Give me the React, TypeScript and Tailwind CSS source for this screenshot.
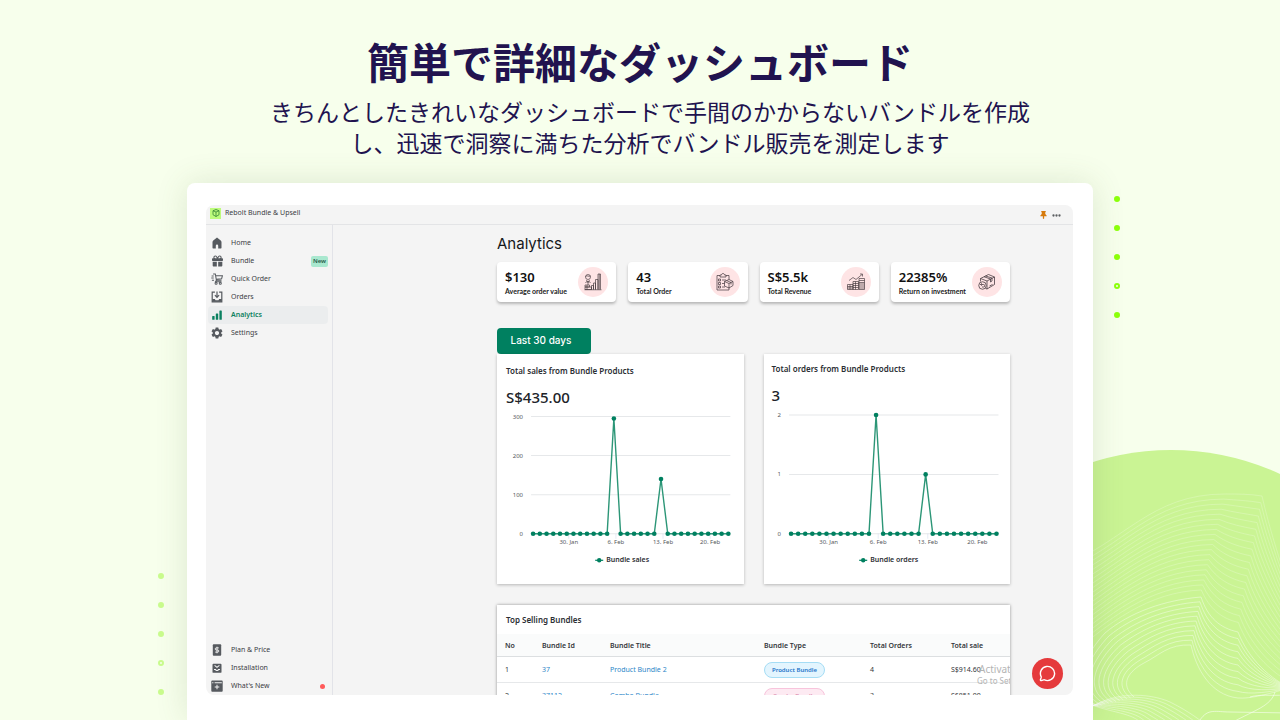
import type { ReactNode } from "react";
import clsx from "clsx";
import { MessageCircle } from "lucide-react";
import { FaGift } from "react-icons/fa6";
import { MdSettings } from "react-icons/md";

type NavItem = {
  label: string;
  icon: ReactNode;
  active?: boolean;
  badge?: string;
  dot?: boolean;
};

function HomeIcon() {
  return (
    <svg viewBox="0 0 20 20" className="h-3 w-3" fill="currentColor">
      <path d="M10 .8 3.800 5.900A3.400 3.400 0 0 0 2.500 8.600V18a1 1 0 0 0 1 1H8v-4.500a2 2 0 0 1 4 0V19h4.500a1 1 0 0 0 1-1V8.600a3.400 3.400 0 0 0-1.300-2.700z" />
    </svg>
  );
}

function CartIcon() {
  return (
    <svg viewBox="0 0 20 20" className="h-3 w-3" fill="none" stroke="currentColor" strokeWidth="1.700">
      <path d="M3.500 1.500h3.700l1.800 10.500h8.500M7.600 4.500h11.400l-1.300 5.200-9 .8M9 12l-1.500 2.500h10" />
      <path d="M1 5h3.500M.5 8.500h4M1.500 12h3.500" />
      <circle cx="8.500" cy="17" r="1.700" />
      <circle cx="15.500" cy="17" r="1.700" />
    </svg>
  );
}

function OrdersIcon() {
  return (
    <svg viewBox="0 0 20 20" className="h-3 w-3" fill="none" stroke="currentColor" strokeWidth="2">
      <path d="M6.500 2H2v16h16V2h-4.500" />
      <path d="M2 13.500h4.500l1 2h5l1-2H18V18H2z" fill="currentColor" stroke="none" />
      <path d="M10 1v9M6.500 7 10 10.500 13.500 7" />
    </svg>
  );
}

function BarsIcon() {
  return (
    <svg viewBox="0 0 20 20" className="h-3 w-3" fill="currentColor">
      <rect x="2" y="11.500" width="4" height="6.500" rx="1" />
      <rect x="8" y="7.500" width="4" height="10.500" rx="1" />
      <rect x="14" y="2.500" width="4" height="15.500" rx="1" />
    </svg>
  );
}

function PriceIcon() {
  return (
    <svg viewBox="0 0 20 20" className="h-3 w-3" fill="none">
      <rect x="3" y="0.500" width="14" height="19" rx="1.500" fill="currentColor" />
      <path d="M13 6.500H8.800a1.700 1.700 0 0 0 0 3.500h2.400a1.700 1.700 0 0 1 0 3.500H7M10 4.500v11" stroke="#f4f4f4" strokeWidth="1.600" />
    </svg>
  );
}

function InstallIcon() {
  return (
    <svg viewBox="0 0 20 20" className="h-3 w-3" fill="none">
      <rect x="2.500" y="3" width="15" height="15" rx="1.500" fill="currentColor" />
      <path d="M6 5.500 10 9l4-3.500M5 12.500h2.500l1 1.500h3l1-1.500H15" stroke="#f4f4f4" strokeWidth="1.700" />
    </svg>
  );
}

function NewsIcon() {
  return (
    <svg viewBox="0 0 20 20" className="h-3 w-3" fill="none">
      <rect x="0.500" y="1" width="19" height="18.500" rx="1.500" fill="currentColor" />
      <path d="M2 4.500h2M6 4.500h12M10 8v7.500M6.200 11.800h7.600" stroke="#f4f4f4" strokeWidth="1.700" />
    </svg>
  );
}

const mainNav: NavItem[] = [
  { label: "Home", icon: <HomeIcon /> },
  { label: "Bundle", icon: <FaGift className="h-3 w-[11px]" />, badge: "New" },
  { label: "Quick Order", icon: <CartIcon /> },
  { label: "Orders", icon: <OrdersIcon /> },
  { label: "Analytics", icon: <BarsIcon />, active: true },
  { label: "Settings", icon: <MdSettings className="h-[14px] w-[14px] shrink-0" /> },
];

const footerNav: NavItem[] = [
  { label: "Plan & Price", icon: <PriceIcon /> },
  { label: "Installation", icon: <InstallIcon /> },
  { label: "What's New", icon: <NewsIcon />, dot: true },
];

function NavList({ items }: { items: NavItem[] }) {
  return (
    <ul>
      {items.map((item) => (
        <li key={item.label} className="pr-1 pl-0.5">
          <a
            href="#"
            className={clsx(
              "flex h-[18px] items-center rounded-sm pl-[3px] text-[7px]",
              item.active ? "bg-[#ebedee] font-semibold text-[#0b8060]" : "text-[#3c4044]",
            )}
          >
            <span className={clsx("flex w-3 justify-center", !item.active && "text-[#565a5f]")}>
              {item.icon}
            </span>
            <span className="ml-2 pt-px">{item.label}</span>
            {item.badge && (
              <span className="ml-auto flex h-[11px] w-[17px] items-center justify-center rounded-xs bg-[#a9e8cf] text-[6px] font-semibold text-[#28594a]">
                {item.badge}
              </span>
            )}
            {item.dot && <span className="mr-[3px] ml-auto h-[5px] w-[5px] rounded-full bg-[#ff5a5a]" />}
          </a>
        </li>
      ))}
    </ul>
  );
}

function GrowthIcon() {
  return (
    <svg viewBox="0 0 36 36" className="h-[18px] w-[18px]" fill="none" stroke="#3f3439" strokeWidth="1.300">
      <path d="M1 33.500h34M15 33V25h4v8M19 33V20h4v13M23 33V13h5v20M28 33V2h5v31M30.500 2v31" />
      <circle cx="8" cy="8" r="5" />
      <path d="M3 7c3-3 6 1 10-1M5 14l3 6 3-6M3 20c1-4 9-4 10 0M8 20v4M2 24h9v4H2zM2 28h13v5H2zM6 24v9" />
    </svg>
  );
}

function ClipboardIcon() {
  return (
    <svg viewBox="0 0 36 36" className="h-[18px] w-[18px]" fill="none" stroke="#3f3439" strokeWidth="1.400">
      <path d="M8 5H2v29h24v-5M20 5h6v8M8 8V4h3c0-4 6-4 6 0h3v4z" />
      <path d="M5 12h4v4H5zM5 19h4v4H5zM5 26h4v4H5zM12 14h8M12 21h5M12 28h6" />
      <path d="m17 17 9-4 8 4v8l-8 5-9-4zM17 17l9 4 8-4M26 21v9M21 15l9 4v4" />
    </svg>
  );
}

function RevenueIcon() {
  return (
    <svg viewBox="0 0 36 36" className="h-[18px] w-[18px]" fill="none" stroke="#3f3439" strokeWidth="1.300">
      <path d="m4 15 8-6 6 4L30 3M26 2h5v5" />
      <path d="M24 11h11v22H24zM24 15h11M24 19h11M24 22h11M24 26h11M24 30h11" />
      <path d="M12 17h11v16H12zM12 21h11M12 25h11M12 29h11M1 23h11v10H1zM1 27h11M1 30h11M6 23v10M17 17v16" />
    </svg>
  );
}

function ReturnIcon() {
  return (
    <svg viewBox="0 0 36 36" className="h-[18px] w-[18px]" fill="none" stroke="#3f3439" strokeWidth="1.500">
      <path d="M5 17V11L21 3l12 5v15l-15 9-3-1M5 11l13 5 15-8M18 16v16M12 7.500 25 12v6l3-2v-6L15 6" />
      <circle cx="9" cy="25" r="7.500" fill="#fee4e5" />
      <path d="M5 23h6a2.500 2.500 0 0 1 0 5H8M7.500 20.500 5 23l2.500 2.500M23 26l6-3" />
    </svg>
  );
}

const metrics = [
  { value: "$130", label: "Average order value", icon: <GrowthIcon /> },
  { value: "43", label: "Total Order", icon: <ClipboardIcon /> },
  { value: "S$5.5k", label: "Total Revenue", icon: <RevenueIcon /> },
  { value: "22385%", label: "Return on investment", icon: <ReturnIcon /> },
];

type ChartProps = {
  title: string;
  total: string;
  legend: string;
  legendX: number;
  max: number;
  step: number;
  peaks: [number, number];
  top: number;
  bottom: number;
  left: number;
  spacing: number;
  headerClass: string;
};

const DAYS = 30;
const WEEKS = ["30. Jan", "6. Feb", "13. Feb", "20. Feb"];

function ChartCard(props: ChartProps) {
  const { title, total, legend, legendX, max, step, peaks, top, bottom, left, spacing, headerClass } = props;
  const yFor = (value: number) => bottom - (value / max) * (bottom - top);
  const points = Array.from({ length: DAYS }, (_, day) => {
    const value = day === 12 ? peaks[0] : day === 19 ? peaks[1] : 0;
    return { x: left + day * spacing, y: yFor(value) };
  });
  const ticks = Array.from({ length: max / step + 1 }, (_, i) => i * step);
  const right = left + (DAYS - 1) * spacing;

  return (
    <section className="bg-white shadow-[0_1px_3px_rgba(0,0,0,0.25)]">
      <div className={clsx("h-[55px]", headerClass)}>
        <h2 className="text-[8px] leading-[14px] font-semibold text-[#2b2e33]">{title}</h2>
        <p className="mt-2 text-[15px] leading-[22px] font-medium text-[#202328]">{total}</p>
      </div>
      <svg viewBox="0 0 246 175" className="block w-full" role="img" aria-label={legend}>
        {ticks.map((tick) => (
          <g key={tick}>
            <line x1={left - 2} x2={right + 2} y1={yFor(tick)} y2={yFor(tick)} stroke="#e6e8ea" strokeWidth="1" />
            <text x={left - 10} y={yFor(tick) + 2} textAnchor="end" fontSize="6" fill="#55585c">
              {tick}
            </text>
          </g>
        ))}
        {WEEKS.map((week, i) => {
          const x = left + (5.300 + i * 7) * spacing;
          return (
            <g key={week}>
              <line x1={x} x2={x} y1={bottom} y2={bottom + 5} stroke="#ccd6eb" strokeWidth="0.500" />
              <text x={x} y={bottom + 10} textAnchor="middle" fontSize="6" fill="#55585c">
                {week}
              </text>
            </g>
          );
        })}
        <polyline
          points={points.map((p) => `${p.x},${p.y}`).join(" ")}
          fill="none"
          stroke="#2c9677"
          strokeWidth="1.400"
        />
        {points.map((p) => (
          <circle key={p.x} cx={p.x} cy={p.y} r="2.300" fill="#008060" />
        ))}
        <line x1={legendX - 4} x2={legendX + 4} y1="151" y2="151" stroke="#008060" strokeWidth="1.200" />
        <circle cx={legendX} cy="151" r="2.200" fill="#008060" />
        <text x={legendX + 7} y="153" fontSize="7" fontWeight="600" fill="#2b2e33">
          {legend}
        </text>
      </svg>
    </section>
  );
}

const bundles = [
  { no: 1, id: "37", title: "Product Bundle 2", type: "Product Bundle", orders: 4, sale: "S$914.60", tone: "blue" },
  { no: 2, id: "37112", title: "Combo Bundle", type: "Combo Bundle", orders: 3, sale: "S$851.00", tone: "pink" },
];

function BundleTable() {
  return (
    <section className="relative mt-[21px] overflow-hidden bg-white shadow-[0_0_3px_rgba(0,0,0,0.4)]">
      <h2 className="pl-[9px] text-[8px] leading-[29px] font-semibold text-[#2b2e33]">Top Selling Bundles</h2>
      <table className="w-full table-fixed text-left text-[7px] leading-[10px] whitespace-nowrap text-[#33363a]">
        <colgroup>
          <col className="w-[45px]" />
          <col className="w-[68px]" />
          <col className="w-[154px]" />
          <col className="w-[106px]" />
          <col className="w-[81px]" />
          <col />
        </colgroup>
        <thead>
          <tr className="h-[22px] border-b border-[#dcdfe1] bg-[#fafbfb]">
            <th className="pt-0.5 pl-2 font-semibold">No</th>
            <th className="pt-0.5 font-semibold">Bundle Id</th>
            <th className="pt-0.5 font-semibold">Bundle Title</th>
            <th className="pt-0.5 font-semibold">Bundle Type</th>
            <th className="pt-0.5 font-semibold">Total Orders</th>
            <th className="pt-0.5 font-semibold">Total sale</th>
          </tr>
        </thead>
        <tbody>
          {bundles.map((row) => (
            <tr key={row.no} className="h-[26px] border-b border-[#e6e8ea]">
              <td className="pt-0.5 pl-2">{row.no}</td>
              <td className="pt-0.5">
                <a href="#" className="text-[#2c86c8]">{row.id}</a>
              </td>
              <td className="pt-0.5">
                <a href="#" className="text-[#2c86c8]">{row.title}</a>
              </td>
              <td className="pt-0.5">
                <span
                  className={clsx(
                    "flex h-4 w-[61px] items-center justify-center rounded-full border text-[6px] font-semibold",
                    row.tone === "blue"
                      ? "border-[#a5ddf5] bg-[#e3f5fe] text-[#2374c9]"
                      : "border-[#f8c4dc] bg-[#fdeaf2] text-[#dc8fb0]",
                  )}
                >
                  {row.type}
                </span>
              </td>
              <td className="pt-0.5">{row.orders}</td>
              <td className="pt-0.5">{row.sale}</td>
            </tr>
          ))}
        </tbody>
      </table>
      <div className="pointer-events-none absolute top-[57px] -right-3 w-[45px] whitespace-nowrap text-[#b4b4b4]">
        <p className="pl-0.5 text-[10px] leading-[14px]">Activate</p>
        <p className="text-[8px] leading-[10px]">Go to Sett</p>
      </div>
    </section>
  );
}

function Dots({ className, tone }: { className: string; tone: "bright" | "soft" }) {
  const color = tone === "bright" ? "border-[#8bff0a]" : "border-[#c8fb8c]";
  return (
    <div aria-hidden="true" className={clsx("absolute flex flex-col gap-[23px]", className)}>
      {[0, 1, 2, 3, 4].map((i) => (
        <span key={i} className={clsx("h-1.5 w-1.5 rounded-full", color, i === 3 ? "border-2" : "border-3")} />
      ))}
    </div>
  );
}

// Contour lines: each family is interpolated from its outer line to its inner one.
function mix(a: number[], b: number[], t: number) {
  return a.map((v, i) => Math.round((v + (b[i] - v) * t) * 10) / 10);
}

function curve(n: number[]) {
  let d = `M${n[0]} ${n[1]}`;
  for (let i = 2; i + 5 < n.length; i += 6) {
    d += `C${n.slice(i, i + 6).join(" ")}`;
  }
  return d;
}

const WIDE_OUTER = [1060, 567, 1125, 542, 1150, 494, 1225, 494, 1238, 494, 1250, 494, 1262, 496, 1268, 522, 1276, 550, 1290, 590];
const WIDE_INNER = [1060, 670, 1108, 625, 1150, 597, 1200, 595, 1208, 615, 1220, 625, 1237, 629, 1247, 655, 1268, 678, 1295, 690];
const LOOP_OUTER = [1098, 706, 1065, 690, 1085, 655, 1105, 633, 1130, 612, 1165, 600, 1201, 597, 1208, 618, 1220, 628, 1238, 632, 1248, 658, 1270, 680, 1295, 690];
const LOOP_INNER = [1134, 697, 1119, 684, 1129, 671, 1144, 663, 1160, 655, 1168, 644, 1191, 645, 1196, 668, 1210, 695, 1238, 698, 1250, 699, 1270, 694, 1295, 686];
const BASE_OUTER = [1085, 712, 1110, 690, 1150, 693, 1170, 702, 1190, 712, 1200, 720, 1210, 728];
const BASE_INNER = [1085, 702, 1105, 712, 1130, 712, 1140, 722, 1145, 726, 1150, 728, 1155, 735];

function Backdrop() {
  const wide = Array.from({ length: 20 }, (_, i) => curve(mix(WIDE_OUTER, WIDE_INNER, i / 20)));
  const loops = Array.from({ length: 11 }, (_, i) => curve(mix(LOOP_OUTER, LOOP_INNER, i / 10)));
  const base = Array.from({ length: 10 }, (_, i) => curve(mix(BASE_OUTER, BASE_INNER, i / 9)));
  return (
    <svg aria-hidden="true" viewBox="911 450 369 270" className="absolute right-0 bottom-0 h-[270px] w-[369px]">
      <circle cx="1171" cy="710" r="260" fill="#caf494" />
      <g fill="none" stroke="#fff">
        {wide.map((d) => <path key={d} d={d} strokeWidth="0.800" opacity="0.28" />)}
        {loops.map((d) => <path key={d} d={d} strokeWidth="0.800" opacity="0.5" />)}
        {base.map((d) => <path key={d} d={d} strokeWidth="0.800" opacity="0.45" />)}
        <path d="M1250 697c10-3 20-1 35-2M1200 720c8-12 16-8 30-8l60 1M1275 692c-4 14-20 18-42 30" strokeWidth="0.900" opacity="0.6" />
      </g>
    </svg>
  );
}

export default function App() {
  return (
    <div className="relative flex h-screen flex-col overflow-hidden bg-[#f7ffec] font-['Noto_Sans',sans-serif]">
      <Backdrop />
      <header className="shrink-0 pt-[30px] pb-[25px] text-center font-['Noto_Sans_CJK_JP',sans-serif] text-[#21134f]">
        <h1 className="text-[42px] leading-[62px] font-bold">簡単で詳細なダッシュボード</h1>
        <p className="mt-1 pl-5 text-[23px] leading-[31px]">
          きちんとしたきれいなダッシュボードで手間のかからないバンドルを作成
          <br />
          し、迅速で洞察に満ちた分析でバンドル販売を測定します
        </p>
      </header>

      <div className="relative mx-[187px] min-h-0 flex-1 rounded-t-lg bg-white pt-[22px] pr-5 pb-[25px] pl-[19px] shadow-[0_0_32px_rgba(90,110,60,0.16)]">
        <Dots className="top-[13px] left-full ml-[21px]" tone="bright" />
        <Dots className="right-full bottom-[25px] mr-[23px]" tone="soft" />

        <div className="relative flex h-full flex-col overflow-hidden rounded-lg bg-[#f4f4f4]">
          <div className="flex h-5 shrink-0 items-start justify-between border-b border-[#e3e4e6] pr-3 pl-1">
            <div className="flex items-center gap-1 pt-0.5">
              <span className="flex h-[11px] w-[11px] items-center justify-center bg-[#bdfb7c]">
                <svg viewBox="0 0 16 16" className="h-2 w-2" fill="none" stroke="#2f7d32" strokeWidth="1.500">
                  <path d="m8 1 6 2.500v8L8 15l-6-3.500v-8zM2 3.500 8 6l6-2.500M8 6v9" />
                </svg>
              </span>
              <span className="text-[7px] leading-3 text-[#3c4044]">Rebolt Bundle &amp; Upsell</span>
            </div>
            <div className="flex items-center gap-[5px] pt-1.5">
              <button type="button" aria-label="Pin">
                <svg viewBox="0 0 14 18" className="h-2 w-[7px]" fill="#d67a0c">
                  <path d="M2 0h10v2l-1 1v4l3 3v2H8.500v5L7 18l-1.500-1v-5H0v-2l3-3V3L2 2z" />
                </svg>
              </button>
              <button type="button" aria-label="More">
                <svg viewBox="0 0 18 6" className="h-[3px] w-[9px]" fill="#5c5f62">
                  <circle cx="3" cy="3" r="2.300" />
                  <circle cx="9" cy="3" r="2.300" />
                  <circle cx="15" cy="3" r="2.300" />
                </svg>
              </button>
            </div>
          </div>

          <div className="flex min-h-0 flex-1">
            <nav className="flex w-[127px] shrink-0 flex-col justify-between border-r border-[#e2e3e8] pt-[9px]">
              <NavList items={mainNav} />
              <NavList items={footerNav} />
            </nav>

            <main className="min-w-0 flex-1 overflow-hidden pt-[9px] pr-[63px] pl-[164px]">
              <h1 className="font-['Inter',sans-serif] text-[15px] leading-5 text-[#16181b]">Analytics</h1>

              <div className="mt-2 grid grid-cols-4 gap-3">
                {metrics.map((metric) => (
                  <section
                    key={metric.label}
                    className="flex h-10 items-center justify-between rounded-sm bg-white px-2 shadow-[0_2px_3px_rgba(0,0,0,0.25)]"
                  >
                    <div className="pt-0.5 whitespace-nowrap">
                      <p className="text-[13px] leading-4 font-semibold text-[#111]">{metric.value}</p>
                      <p className="font-['Lato',sans-serif] text-[7px] leading-3 font-bold text-[#222]">{metric.label}</p>
                    </div>
                    <span className="-ml-2 flex h-[30px] w-[30px] shrink-0 items-center justify-center rounded-full bg-[#fee4e5]">
                      {metric.icon}
                    </span>
                  </section>
                ))}
              </div>

              <button
                type="button"
                className="mt-[26px] block h-[26px] w-[94px] rounded-sm bg-[#008060] pr-1.5 pb-0.5 text-center font-['Inter',sans-serif] text-[10px] font-medium text-white"
              >
                Last 30 days
              </button>

              <div className="grid grid-cols-2 gap-5">
                <ChartCard
                  title="Total sales from Bundle Products"
                  total="S$435.00"
                  legend="Bundle sales"
                  legendX={102}
                  max={300}
                  step={100}
                  peaks={[295, 140]}
                  top={7.500}
                  bottom={124.500}
                  left={36}
                  spacing={6.720}
                  headerClass="pt-[10px] pl-[9px]"
                />
                <ChartCard
                  title="Total orders from Bundle Products"
                  total="3"
                  legend="Bundle orders"
                  legendX={99}
                  max={2}
                  step={1}
                  peaks={[2, 1]}
                  top={6}
                  bottom={124.500}
                  left={27}
                  spacing={7.070}
                  headerClass="pt-2 pl-2"
                />
              </div>

              <BundleTable />
            </main>
          </div>

          <button
            type="button"
            aria-label="Open chat"
            className="absolute right-2.5 bottom-1.5 flex h-[31px] w-[31px] items-center justify-center rounded-full bg-[#e53a3c]"
          >
            <MessageCircle className="h-[17px] w-[17px] text-white" strokeWidth={2} />
          </button>
        </div>
      </div>
    </div>
  );
}
